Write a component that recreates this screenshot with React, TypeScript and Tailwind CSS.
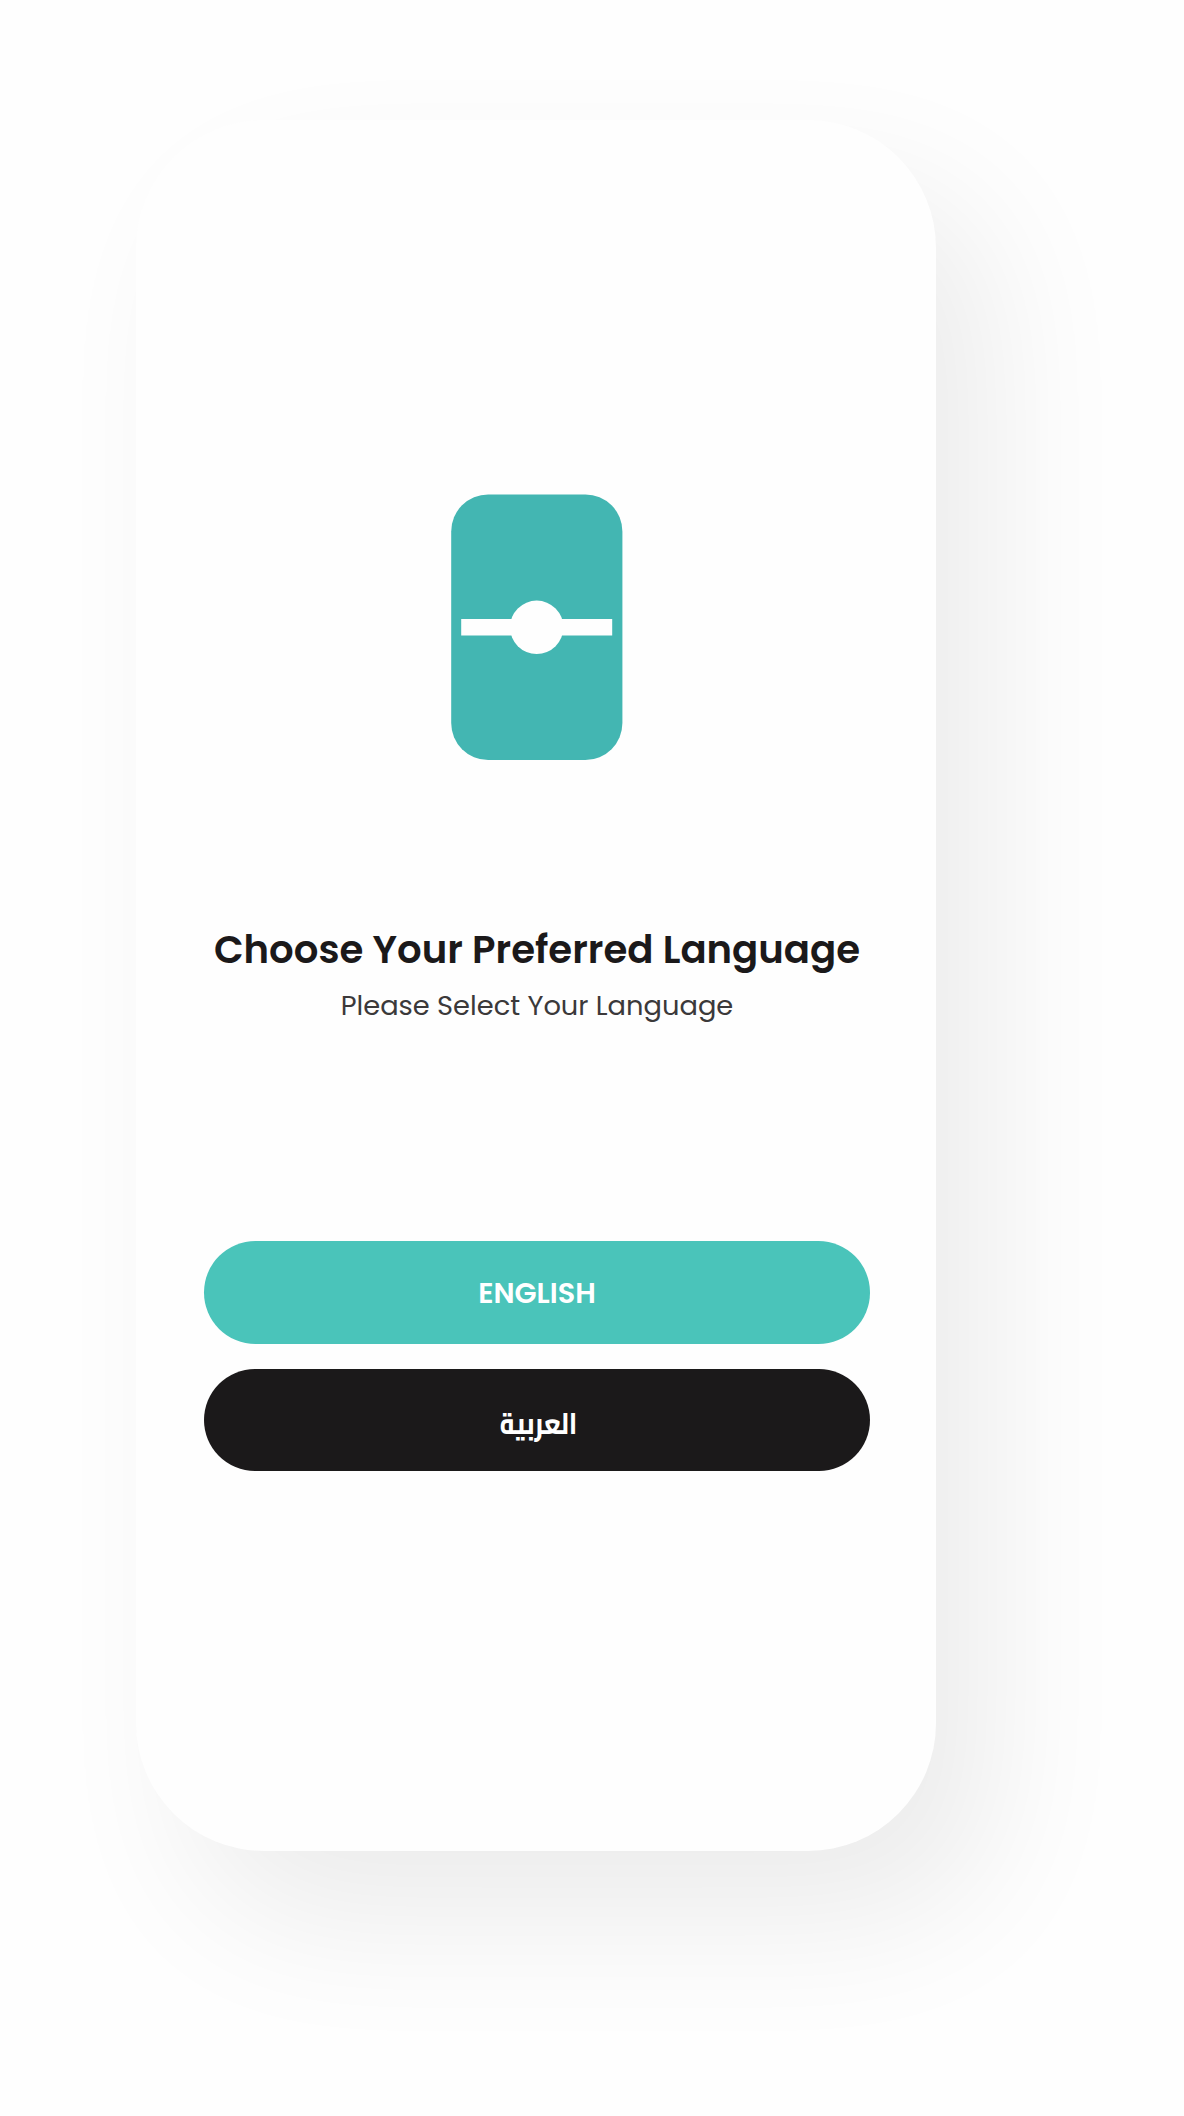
function Logo() {
  return (
    <svg width="172" height="266" viewBox="0 0 172 266" className="block">
      <rect x="0.2" y="0.4" width="171.2" height="265.6" rx="37" fill="#43b6b2" />
      <rect x="10.2" y="125" width="151" height="16.5" fill="#fefefe" />
      <circle cx="85.7" cy="133.3" r="26.7" fill="#fefefe" />
    </svg>
  );
}

export default function App() {
  return (
    <main className="h-[2116px] w-[1184px] overflow-hidden bg-[#fefefe] pt-[120px] pl-[136px] font-['Poppins','Inter',sans-serif]">
      <section className="flex h-[1731px] w-[800px] flex-col items-center rounded-[128px] bg-[#fefefe] pt-[374px] pl-[2px] shadow-[56px_70px_140px_rgba(0,0,0,0.075)]">
        <Logo />
        <h1 className="mt-[165px] text-[38.65px] leading-[50px] font-semibold whitespace-nowrap text-[#1b191a]">
          Choose Your Preferred Language
        </h1>
        <p className="mt-[13px] text-[27.3px] leading-[36px] whitespace-nowrap text-[#3b393a]">
          Please Select Your Language
        </p>
        <div className="mt-[217px] flex w-[666px] flex-col gap-[25px]">
          <button className="h-[102.5px] rounded-full bg-[#4ac4ba] pt-[2px] text-[28.7px] font-semibold text-white">
            ENGLISH
          </button>
          <button
            lang="ar"
            dir="rtl"
            className="h-[102px] rounded-full bg-[#1b191a] pt-[9px] pl-[3px] text-[29.5px] font-extrabold text-white font-['Cairo','Noto_Kufi_Arabic','DejaVu_Sans',sans-serif]"
          >
            <span className="inline-block scale-x-[0.835]">العربية</span>
          </button>
        </div>
      </section>
    </main>
  );
}
